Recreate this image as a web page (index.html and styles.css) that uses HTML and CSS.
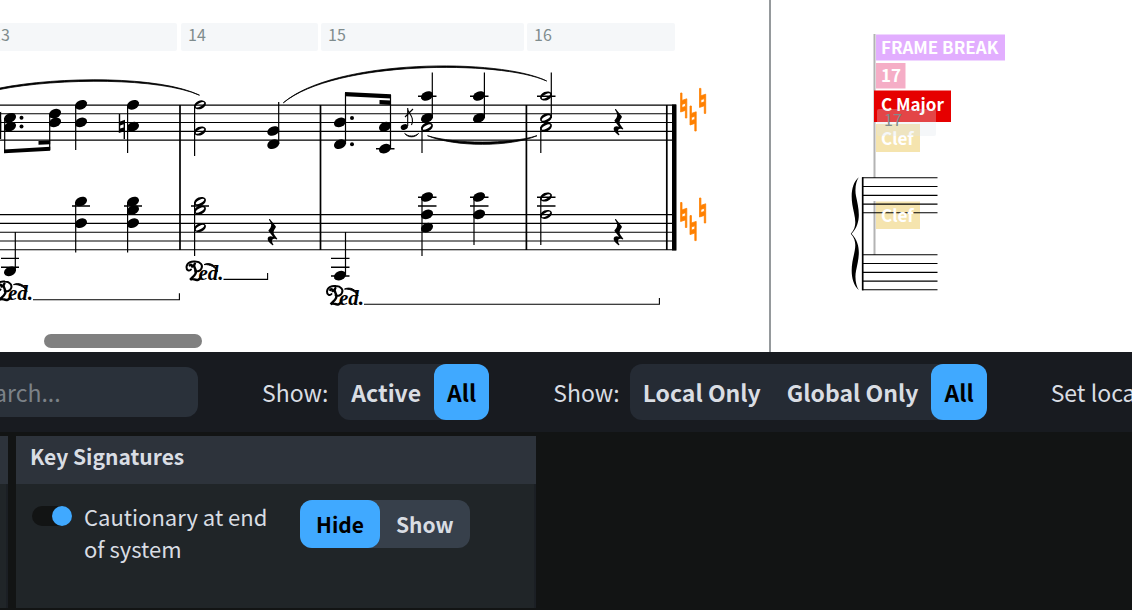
FILE: index.html
```
<!doctype html>
<html lang="en">
<head>
	<meta charset="utf-8">
	<meta name="viewport" content="width=device-width, initial-scale=1.0">
	<title>Key Signatures</title>
	<link rel="stylesheet" href="styles.css">
</head>
<body>
	<main class="score">
		<svg class="score-canvas" width="1132" height="352" viewBox="0 0 1132 352" role="img" aria-label="Score, bars 13 to 17">
			<defs>
				<ellipse id="head" rx="6.3" ry="4.5" transform="rotate(-24)"/>
				<path id="half" fill-rule="evenodd" d="M-5.8 2.4A6.3 4.6 -22 0 1 5.8 -2.4A6.3 4.6 -22 0 1 -5.8 2.4ZM-4.2 2.3A4.8 1.8 -29 0 0 4.2 -2.3A4.8 1.8 -29 0 0 -4.2 2.3Z"/>
				<path id="natural" d="M0 0H1.4V7.4L6.2 5.8V25H4.8V17.4L0 19ZM1.4 11.4V14.6L4.8 13.4V10.2Z" fill-rule="evenodd"/>
				<path id="rest" d="M1.6 .2C2.2 -.2 2.7 .3 3.1 .9L8 7C8.6 7.8 8.4 8.4 7.9 9C5.8 11.6 5.4 14 7.2 16.2L9.8 19.8C9.6 20.6 9.2 20.4 8.6 20.2C5.9 19.2 4.3 20.2 4.5 22.2C4.6 23.5 5.4 24.7 6 25.6C5.8 26.4 5.2 26.2 4.7 25.9C1.8 24.1 -.2 21.4 .2 19.3C.6 17.2 3 16.6 5.5 17.7L1.2 12.3C.8 11.6 1 11.2 1.5 10.7C4 8.3 4.4 5.4 2.6 2.5C2 1.5 1.2 .8 1.6 .2Z"/>
				<g id="ped">
					<path d="M5.5 8.5C4 10.5 .8 9.5 1 6C1.4 1.5 6 0 10 .6C15 1 17.5 4 16 7.4C15 10 12 10.8 9.6 9.8" fill="none" stroke="#000" stroke-width="2" stroke-linecap="round"/>
					<path d="M4.2 4.4C5.2 3.2 7 4 6.6 5.6M9.4 2.6C6.4 5.4 12 8.6 10 12.6C9 15 6.6 16.4 4.6 18.8C7.4 16.4 9.4 20 12.6 18.8C14 18.2 14.8 17.4 15.4 16.4" fill="none" stroke="#000" stroke-width="2.4" stroke-linecap="round"/>
					<path d="M18.5 3.6C23.5 1 30.5 3.6 32 10.5C30.4 7 25 3 18.5 3.6Z" stroke="#000" stroke-width="1"/>
					<text class="ped-text" x="13" y="19">ed.</text>
				</g>
			</defs>

			<g class="bar-label">
				<rect x="-20" y="23" width="197" height="28" rx="2"/>
				<rect x="181" y="23" width="137" height="28" rx="2"/>
				<rect x="321" y="23" width="203" height="28" rx="2"/>
				<rect x="527" y="23" width="148" height="28" rx="2"/>
				<text x="-8" y="41">13</text>
				<text x="188" y="41">14</text>
				<text x="328" y="41">15</text>
				<text x="534" y="41">16</text>
			</g>

			<!-- staves and barlines -->
			<path class="staff" d="M0 105.1H676M0 113.8H676M0 122.5H676M0 131.4H676M0 140.1H676M0 214.6H676M0 223.4H676M0 232.3H676M0 241H676M0 249.8H676"/>
			<path class="barline" d="M180 105V250M320.5 105V250M526.4 105V250M666.8 105V250"/>
			<rect x="672" y="104.5" width="4.5" height="146"/>

			<!-- stems -->
			<path class="stem" d="M4.7 118V152M49.7 114V150M75.7 105V150M127.6 105V153M194.6 105V156M278.7 102V144M345.5 93V144M390.5 95V148M432.3 72.5V118M422 127V153M484.4 72.5V118M551.3 72.5V118M540.8 127V153M15.3 232V271M75.7 202V252.5M127.6 202V252.5M194.6 202V256M345.5 232V275M422 197V256M474 197V245M540.8 197V245"/>
			<path class="ledger" d="M376 148.7H394.5M418 96.3H436.5M470 96.3H488.5M537 96.3H555.5M1 258.4H19M1 267.2H19M72 206H90M124 206H142M191 206H209M331 258.4H349.5M331 267.2H349.5M331 276H349.5M418 197.3H436.5M418 206H436.5M470 197.3H488.5M470 206H488.5M537 197.3H555.5M537 206H555.5"/>

			<!-- beams -->
			<path d="M4 149.4L50.2 146.8V150.8L4 153.2ZM38.5 141L50.2 140.4V144.2L38.5 144.8ZM345 92L391 94.3V98.6L345 96.2ZM379.5 100L391 100.6V105L379.5 104.2Z"/>

			<!-- upper staff -->
			<use href="#natural" x="-5" y="106"/>
			<use href="#natural" x="-5" y="114"/>
			<use href="#head" x="10" y="117.8"/>
			<use href="#head" x="10" y="126.6"/>
			<use href="#head" x="55" y="113.6"/>
			<use href="#head" x="55" y="122.4"/>
			<use href="#head" x="81" y="104.8"/>
			<use href="#head" x="81" y="122.4"/>
			<use href="#natural" x="118.8" y="114"/>
			<use href="#head" x="133" y="104.8"/>
			<use href="#head" x="133" y="126.7"/>
			<use href="#half" x="200" y="104.8"/>
			<use href="#half" x="200" y="131"/>
			<use href="#head" x="273.3" y="131"/>
			<use href="#head" x="273.3" y="144.2"/>
			<use href="#head" x="340" y="122.4"/>
			<use href="#head" x="340" y="144.2"/>
			<use href="#head" x="385" y="126.7"/>
			<use href="#head" x="385" y="148.6"/>
			<use href="#head" x="427" y="96"/>
			<use href="#head" x="427" y="118"/>
			<use href="#half" x="427" y="127"/>
			<use href="#head" x="479" y="96"/>
			<use href="#head" x="479" y="118"/>
			<use href="#half" x="546" y="96"/>
			<use href="#half" x="546" y="118"/>
			<use href="#half" x="546" y="127"/>
			<use href="#rest" x="613.5" y="109"/>
			<circle cx="21.5" cy="117.8" r="2"/>
			<circle cx="21.5" cy="126.6" r="2"/>
			<circle cx="352" cy="118" r="2"/>
			<circle cx="352" cy="144.2" r="2"/>

			<!-- grace note -->
			<ellipse cx="404.3" cy="127" rx="3.7" ry="2.7" transform="rotate(-24 404.3 127)"/>
			<path class="thin" d="M407.7 108V126M407.7 109C408.5 114 415 117 411.5 125M405 117L413 109"/>

			<!-- lower staff -->
			<use href="#head" x="10" y="271.3"/>
			<use href="#head" x="81" y="201.5"/>
			<use href="#head" x="81" y="223.2"/>
			<use href="#head" x="133" y="201.5"/>
			<use href="#head" x="133" y="210"/>
			<use href="#head" x="133" y="223.2"/>
			<use href="#half" x="200" y="201.5"/>
			<use href="#half" x="200" y="210"/>
			<use href="#half" x="200" y="227.6"/>
			<use href="#rest" x="267.5" y="219"/>
			<use href="#head" x="340" y="275.6"/>
			<use href="#head" x="427" y="197"/>
			<use href="#head" x="427" y="214.4"/>
			<use href="#head" x="427" y="227.6"/>
			<use href="#head" x="479" y="197"/>
			<use href="#head" x="479" y="214.4"/>
			<use href="#half" x="546" y="197"/>
			<use href="#half" x="546" y="214.4"/>
			<use href="#rest" x="613.5" y="219"/>

			<!-- slurs and tie -->
			<path class="slur" d="M-1 88.2C60 76 160 76 199.5 95.2C160 77.8 60 77.6 -1 89.6Z"/>
			<path class="slur" d="M283.3 102.8C335 58.4 500 58 546.7 81C500 60 335 60.4 283.3 102.8Z"/>
			<path class="slur" d="M427.5 135.7C455 144.2 510 144.2 537 135.7C510 147.2 455 147.2 427.5 135.7Z"/>
			<path class="slur" d="M404.7 133.4C408 136.8 415 136.8 418.6 133.4C415 138 408 138 404.7 133.4Z"/>

			<!-- pedal lines -->
			<use href="#ped" x="-5" y="281"/>
			<use href="#ped" x="185.5" y="261"/>
			<use href="#ped" x="326" y="285.5"/>
			<path class="pedal" d="M33 299.7H179.4V293.3M223.5 279.4H267.6V273M364 304.3H659.4V298"/>

			<!-- cancelled key signature -->
			<g class="cancelled">
				<use href="#natural" x="680.6" y="93"/>
				<use href="#natural" x="690" y="106"/>
				<use href="#natural" x="699.5" y="88.4"/>
				<use href="#natural" x="680.6" y="202.5"/>
				<use href="#natural" x="690" y="215.6"/>
				<use href="#natural" x="699.5" y="198"/>
			</g>

			<!-- next frame -->
			<rect class="frame-edge" x="769" y="0" width="2" height="352"/>
			<rect fill="#e2aeff" x="876" y="34.5" width="129" height="26"/>
			<rect fill="#f5adc6" x="876" y="63" width="29.5" height="25.5"/>
			<rect fill="#f5e4ae" x="876" y="124" width="44" height="28"/>
			<rect fill="#f5e4ae" x="876" y="201.5" width="44" height="27.5"/>
			<path class="signpost-line" d="M874.5 34V178M874.5 201V255"/>
			<rect fill="#e60000" x="874" y="90.5" width="77" height="31.5"/>
			<path class="staff" d="M862 177.8H937.5M862 186.5H937.5M862 195.4H937.5M862 204.1H937.5M862 212.8H937.5M862 254.8H937.5M862 263.5H937.5M862 272.4H937.5M862 281.1H937.5M862 289.8H937.5"/>
			<path class="barline" d="M862.7 177.3V290.3"/>
			<path d="M858.8 177.3C856 181 854.6 189 856 196C858.5 208 862.5 222 851.6 233.7C862.5 245.4 858.5 259 856 271C854.6 278 856 286 858.8 290C852 284 850.6 273 852.4 262C854 252 858.8 242 850.8 233.7C858.8 225.4 854 215 852.4 205C850.6 194 852 183 858.8 177.3Z"/>
			<g class="signpost-text">
				<text x="881" y="54">FRAME BREAK</text>
				<text x="881" y="82">17</text>
				<text x="881" y="111">C Major</text>
				<text x="881" y="145">Clef</text>
				<text x="881" y="222">Clef</text>
			</g>
			<g class="bar-label bar-label-over">
				<rect x="877" y="109" width="59" height="27" rx="2"/>
				<text x="884" y="126">17</text>
			</g>
		</svg>
		<div class="scrollbar"></div>
	</main>

	<section class="panel">
		<div class="toolbar">
			<input class="search" type="search" placeholder="Search..." aria-label="Search">
			<div class="filter" role="group" aria-labelledby="show-state">
				<span id="show-state">Show:</span>
				<div class="segmented">
					<button type="button">Active</button>
					<button type="button" class="selected" aria-pressed="true">All</button>
				</div>
			</div>
			<div class="filter" role="group" aria-labelledby="show-scope">
				<span id="show-scope">Show:</span>
				<div class="segmented">
					<button type="button">Local Only</button>
					<button type="button">Global Only</button>
					<button type="button" class="selected" aria-pressed="true">All</button>
				</div>
			</div>
			<span class="set-local">Set local</span>
		</div>

		<div class="cards">
			<div class="card card-previous">
				<div class="card-title"></div>
			</div>
			<div class="card">
				<h2 class="card-title">Key Signatures</h2>
				<div class="option">
					<input class="switch" type="checkbox" id="cautionary" checked>
					<label class="option-label" for="cautionary">Cautionary at end of system</label>
					<div class="segmented option-value" role="group" aria-label="Cautionary at end of system">
						<button type="button" class="selected" aria-pressed="true">Hide</button>
						<button type="button">Show</button>
					</div>
				</div>
			</div>
		</div>
	</section>
</body>
</html>
```
FILE: styles.css
```
* {
	box-sizing: border-box;
}
body {
	margin: 0;
	min-height: 100vh;
	display: flex;
	flex-direction: column;
	overflow: hidden;
	background: #121414;
	color: #d9dde3;
	font: 23px/32px "Noto Sans CJK SC", "Noto Sans", sans-serif;
}
button,
input {
	font: inherit;
	color: inherit;
	border: 0;
	margin: 0;
}

/* score */
.score {
	position: relative;
	overflow: hidden;
	background: #fff;
}
.score-canvas {
	display: block;
}
.scrollbar {
	position: absolute;
	left: 44px;
	bottom: 4px;
	width: 158px;
	height: 14px;
	border-radius: 7px;
	background: #808080;
}
.bar-label {
	font-size: 16px;
}
.bar-label rect {
	fill: #f5f7f9;
}
.bar-label text {
	fill: #7f8c8d;
}
.bar-label-over rect {
	fill: #dfe4ea;
	opacity: 0.3;
}
.staff,
.stem,
.ledger,
.barline,
.pedal,
.thin {
	fill: none;
	stroke: #000;
	stroke-width: 1.1;
}
.stem {
	stroke-width: 1.2;
}
.ledger {
	stroke-width: 1.4;
}
.barline {
	stroke-width: 1.7;
}
.slur {
	stroke: #000;
	stroke-width: 0.8;
}
.ped-text {
	font: italic bold 21px "Liberation Serif", serif;
}
.cancelled {
	fill: #ff8000;
	stroke: #ff8000;
	stroke-width: 0.8;
}
.frame-edge {
	fill: #95999c;
}
.signpost-line {
	stroke: #b3b3b3;
	stroke-width: 2;
}
.signpost-text {
	fill: #fff;
	font-size: 17px;
	font-weight: 700;
}

/* properties panel */
.panel {
	flex: 1;
	display: flex;
	flex-direction: column;
}
.toolbar {
	display: flex;
	align-items: center;
	gap: 64px;
	height: 80px;
	background: #181b20;
	white-space: nowrap;
}
.search {
	flex: none;
	width: 238px;
	height: 50px;
	margin-left: -40px;
	padding: 0 8px;
	border-radius: 12px;
	background: #2a313a;
}
.search::placeholder {
	color: #7c8288;
	opacity: 1;
}
.filter {
	display: flex;
	align-items: center;
	gap: 10px;
}
.segmented {
	display: flex;
	border-radius: 12px;
	background: #252b34;
	font-weight: 700;
}
.segmented button {
	height: 56px;
	padding: 0 13px;
	border-radius: 12px;
	background: none;
}
.segmented .selected {
	background: #40a9ff;
	color: #000;
}

.cards {
	flex: 1;
	display: flex;
	gap: 8px;
	padding: 4px 0 2px;
}
.card {
	width: 520px;
	background: #202528;
	border-right: 2px solid #1b1f24;
}
.card-previous {
	width: 8px;
}
.card-previous .card-title {
	padding: 0;
}
.card-title {
	height: 48px;
	margin: 0 -2px 0 0;
	padding: 4px 14px;
	background: #2d333b;
	font-size: 21px;
	font-weight: 700;
}
.option {
	display: flex;
	align-items: flex-start;
	padding: 16px;
	font-size: 22px;
}
.switch {
	appearance: none;
	flex: none;
	width: 40px;
	height: 20px;
	margin: 6px 12px 0 0;
	border-radius: 10px;
	background: #121414;
}
.switch::before {
	content: "";
	display: block;
	width: 20px;
	height: 20px;
	border-radius: 50%;
	background: #7c8288;
}
.switch:checked::before {
	margin-left: 20px;
	background: #40a9ff;
}
.option-label {
	width: 200px;
	margin-right: 16px;
}
.option-value {
	background: #37404b;
	font-size: 21px;
}
.option-value button {
	height: 48px;
	padding: 0 16px;
}
```
